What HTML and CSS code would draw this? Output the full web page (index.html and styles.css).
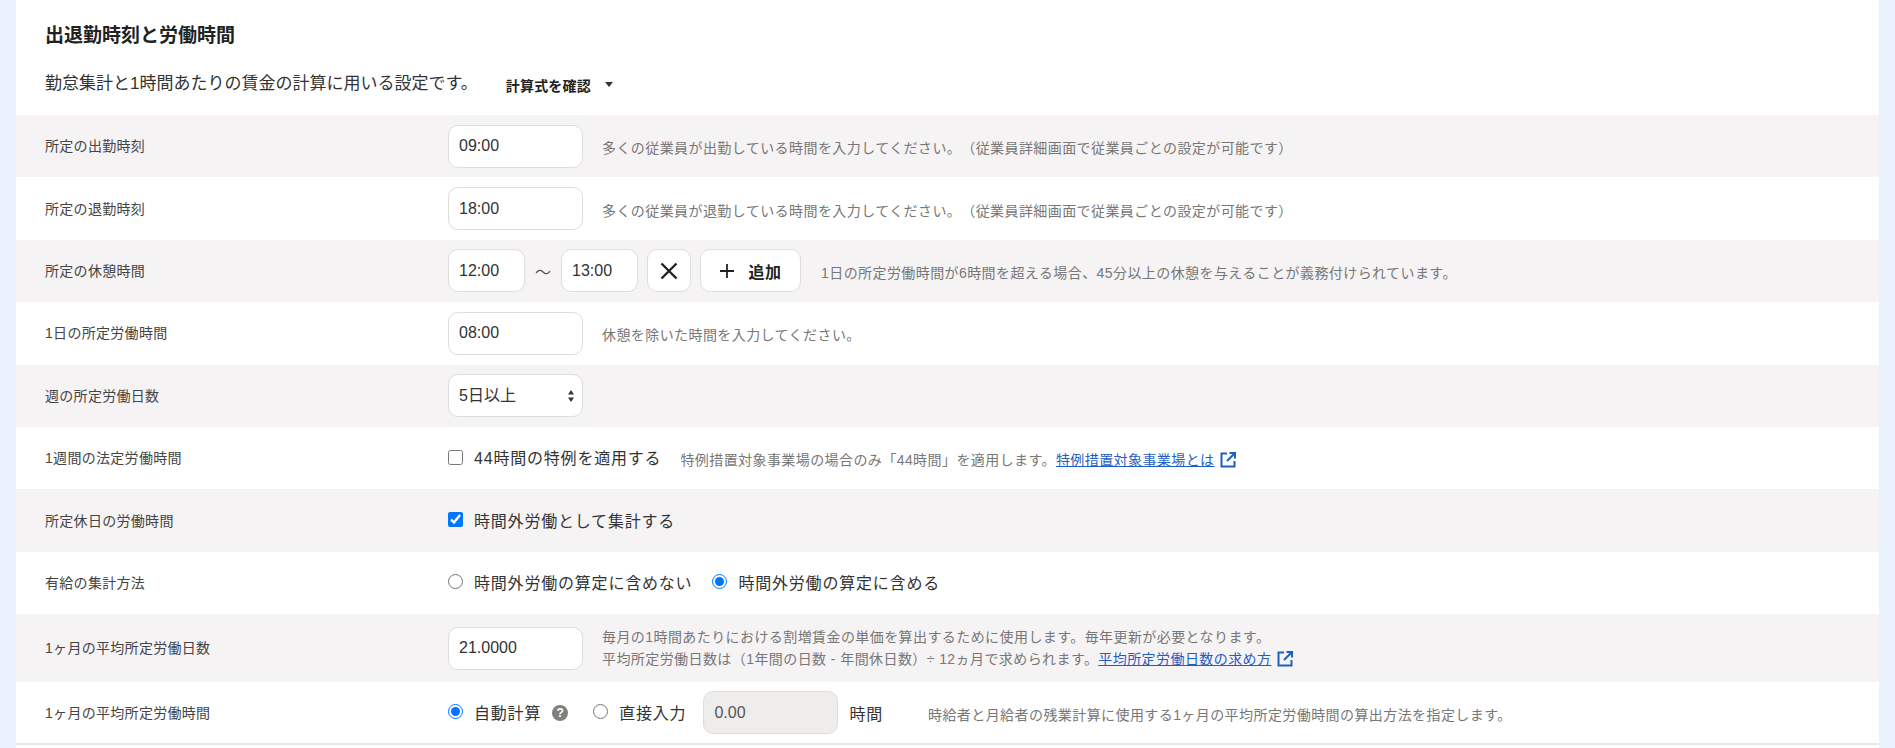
FILE: index.html
```html
<!DOCTYPE html>
<html lang="ja">
<head>
    <meta charset="UTF-8">
    <title>出退勤時刻と労働時間</title>
    <link rel="stylesheet" href="styles.css">
</head>
<body>
    <main class="card">
        <h2 class="title">出退勤時刻と労働時間</h2>
        <div class="lead">
            <p>勤怠集計と1時間あたりの賃金の計算に用いる設定です。</p>
            <button class="toggle" type="button">計算式を確認<span class="caret"></span></button>
        </div>

        <div class="row">
            <div class="label">所定の出勤時刻</div>
            <input class="field" type="text" value="09:00">
            <p class="hint hint-gap">多くの従業員が出勤している時間を入力してください。（従業員詳細画面で従業員ごとの設定が可能です）</p>
        </div>
        <div class="row">
            <div class="label">所定の退勤時刻</div>
            <input class="field" type="text" value="18:00">
            <p class="hint hint-gap">多くの従業員が退勤している時間を入力してください。（従業員詳細画面で従業員ごとの設定が可能です）</p>
        </div>
        <div class="row">
            <div class="label">所定の休憩時間</div>
            <input class="field field-time" type="text" value="12:00">
            <span class="tilde">〜</span>
            <input class="field field-time" type="text" value="13:00">
            <button class="btn btn-icon" type="button">
                <svg width="18" height="18" viewBox="0 0 18 18"><path d="M1.500 1.500l15 15M16.500 1.500l-15 15" fill="none" stroke="#222" stroke-width="2.4"/></svg>
            </button>
            <button class="btn btn-add" type="button">
                <svg width="16" height="16" viewBox="0 0 16 16"><path d="M8 1v14M1 8h14" fill="none" stroke="#222" stroke-width="1.8"/></svg>
                <span>追加</span>
            </button>
            <p class="hint hint-break">1日の所定労働時間が6時間を超える場合、45分以上の休憩を与えることが義務付けられています。</p>
        </div>
        <div class="row">
            <div class="label">1日の所定労働時間</div>
            <input class="field" type="text" value="08:00">
            <p class="hint hint-gap">休憩を除いた時間を入力してください。</p>
        </div>
        <div class="row">
            <div class="label">週の所定労働日数</div>
            <select class="field field-select">
                <option>5日以上</option>
            </select>
        </div>
        <div class="row">
            <div class="label">1週間の法定労働時間</div>
            <label class="check"><input type="checkbox">44時間の特例を適用する</label>
            <p class="hint hint-check">特例措置対象事業場の場合のみ「44時間」を適用します。<a href="#">特例措置対象事業場とは</a>
                <svg class="ext" width="18" height="18" viewBox="0 0 18 18"><path d="M8 2.500H2.500v13h13V10M10.500 2h5.500v5.500M16 2l-8 8" fill="none" stroke="#1f5fc4" stroke-width="2"/></svg>
            </p>
        </div>
        <div class="row">
            <div class="label">所定休日の労働時間</div>
            <label class="check"><input type="checkbox" checked>時間外労働として集計する</label>
        </div>
        <div class="row">
            <div class="label">有給の集計方法</div>
            <label class="check"><input type="radio" name="paid">時間外労働の算定に含めない</label>
            <label class="check check-next"><input type="radio" name="paid" checked>時間外労働の算定に含める</label>
        </div>
        <div class="row row-tall">
            <div class="label">1ヶ月の平均所定労働日数</div>
            <input class="field" type="text" value="21.0000">
            <p class="hint hint-gap hint-lines">毎月の1時間あたりにおける割増賃金の単価を算出するために使用します。毎年更新が必要となります。<br>平均所定労働日数は（1年間の日数 - 年間休日数）÷ 12ヵ月で求められます。<a href="#">平均所定労働日数の求め方</a>
                <svg class="ext" width="18" height="18" viewBox="0 0 18 18"><path d="M8 2.500H2.500v13h13V10M10.500 2h5.500v5.500M16 2l-8 8" fill="none" stroke="#1f5fc4" stroke-width="2"/></svg>
            </p>
        </div>
        <div class="row row-last">
            <div class="label">1ヶ月の平均所定労働時間</div>
            <label class="check"><input type="radio" name="hours" checked>自動計算</label>
            <span class="help">?</span>
            <label class="check check-direct"><input type="radio" name="hours">直接入力</label>
            <input class="field field-hours" type="text" value="0.00" disabled>
            <span class="unit">時間</span>
            <p class="hint hint-unit">時給者と月給者の残業計算に使用する1ヶ月の平均所定労働時間の算出方法を指定します。</p>
        </div>
    </main>
</body>
</html>
```

FILE: styles.css
```css
* {
    box-sizing: border-box;
}
body {
    margin: 0;
    padding: 0 16px;
    height: 748px;
    overflow: hidden;
    background-color: #e9f1fd;
    color: #333;
    font-family: "Liberation Sans", "Noto Sans CJK JP", sans-serif;
    text-spacing-trim: space-all;
}
p {
    margin: 0;
}
.card {
    background-color: #fff;
    height: 748px;
}
.title {
    margin: 0;
    padding: 24px 29px 0;
    height: 62px;
    font-size: 19px;
    line-height: 24px;
    font-weight: bold;
    color: #222;
}
.lead {
    display: flex;
    align-items: center;
    padding-left: 29px;
    height: 53px;
    padding-bottom: 14px;
    font-size: 17px;
}
.toggle {
    display: flex;
    align-items: center;
    margin: 6px 0 0 28px;
    padding: 0;
    border: none;
    background: none;
    color: #222;
    font: inherit;
    font-size: 14px;
    font-weight: bold;
    letter-spacing: 0.2px;
}
.caret {
    margin-left: 14px;
    border-top: 5px solid #333;
    border-left: 4px solid transparent;
    border-right: 4px solid transparent;
}
.row {
    display: flex;
    align-items: center;
    height: 62.4px;
    padding-left: 29px;
}
.row:nth-of-type(even) {
    background-color: #f5f3f4;
}
.row-tall {
    height: 68px;
}
.row-last {
    height: 63px;
    border-bottom: 2px solid #e8e8e8;
}
.label {
    flex: 0 0 403px;
    padding-bottom: 2px;
    font-size: 14px;
    letter-spacing: 0.3px;
    color: #444;
}
.field {
    width: 135px;
    height: 43px;
    padding: 0 10px;
    border: 1px solid #ddd;
    border-radius: 10px;
    background-color: #fff;
    color: #333;
    font-family: inherit;
    font-size: 16px;
}
.field-time {
    width: 77px;
}
.field-select {
    appearance: none;
    background-image: url("data:image/svg+xml,%3Csvg xmlns='http://www.w3.org/2000/svg' width='8' height='12'%3E%3Cpath d='M4 0l3 4.500H1zM4 12L1 7.500h6z' fill='%23333'/%3E%3C/svg%3E");
    background-repeat: no-repeat;
    background-position: right 7px center;
}
.field-hours {
    width: 135px;
    margin-left: 17px;
    background-color: #eeedec;
    color: #555;
}
.tilde {
    width: 36px;
    text-align: center;
    font-size: 16px;
    color: #555;
}
.btn {
    display: flex;
    align-items: center;
    justify-content: center;
    height: 43px;
    border: 1px solid #ddd;
    border-radius: 10px;
    background-color: #fff;
    font-family: inherit;
    color: #222;
}
.btn-icon {
    width: 44px;
    margin-left: 9px;
    padding: 0;
}
.btn-add {
    width: 101px;
    margin-left: 9px;
    padding: 0;
    gap: 13px;
    font-size: 16px;
    font-weight: bold;
    letter-spacing: 0.5px;
}
.hint {
    padding-top: 2px;
    font-size: 14px;
    letter-spacing: 0.42px;
    color: #777;
}
.hint a {
    color: #1f5fc4;
}
.hint-gap {
    margin-left: 19px;
}
.hint-lines {
    padding-top: 0;
    line-height: 22px;
}
.hint-break {
    margin-left: 20px;
}
.hint-check {
    margin-left: 19px;
}
.hint-unit {
    margin-left: 45px;
}
.ext {
    vertical-align: -4px;
}
.check {
    display: flex;
    align-items: center;
    padding-bottom: 2px;
    font-size: 16px;
    letter-spacing: 0.8px;
    color: #333;
}
.check input {
    width: 15px;
    height: 15px;
    margin: 0 11px 0 0;
}
.check-next {
    margin-left: 20px;
}
.check-direct {
    margin-left: 25px;
}
.help {
    display: flex;
    align-items: center;
    justify-content: center;
    width: 16px;
    height: 16px;
    margin-left: 11px;
    border-radius: 50%;
    background-color: #808080;
    color: #fff;
    font-size: 12px;
    font-weight: bold;
}
.unit {
    margin-left: 11px;
    font-size: 16px;
    letter-spacing: 0.8px;
}
```
